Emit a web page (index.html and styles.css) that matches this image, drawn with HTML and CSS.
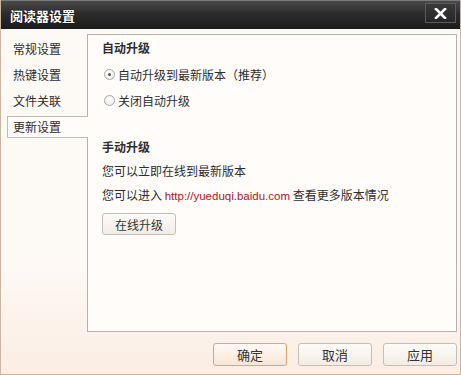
FILE: index.html
```html
<!DOCTYPE html>
<html lang="zh-CN">
<head>
    <meta charset="UTF-8">
    <title>阅读器设置</title>
    <link rel="stylesheet" href="styles.css">
</head>
<body>

<div class="window">
    <div class="titlebar">
        <span class="title">阅读器设置</span>
        <button class="close-btn">
            <svg width="13" height="11" viewBox="0 0 13 11">
                <path d="M2 1 L11 10 M11 1 L2 10" stroke="#fff" stroke-width="2.6" stroke-linecap="square"/>
            </svg>
        </button>
    </div>

    <div class="main">
        <ul class="sidebar">
            <li class="tab">常规设置</li>
            <li class="tab">热键设置</li>
            <li class="tab">文件关联</li>
            <li class="tab active">更新设置</li>
        </ul>

        <div class="panel">
            <div class="section auto">
                <div class="heading">自动升级</div>
                <label class="radio-row"><span class="radio checked"></span>自动升级到最新版本（推荐）</label>
                <label class="radio-row"><span class="radio"></span>关闭自动升级</label>
            </div>

            <div class="section manual">
                <div class="heading">手动升级</div>
                <div class="line">您可以立即在线到最新版本</div>
                <div class="line">您可以进入 <a class="link" href="#">http://yueduqi.baidu.com</a> 查看更多版本情况</div>
                <button class="btn small">在线升级</button>
            </div>
        </div>
    </div>

    <div class="footer">
        <button class="btn primary">确定</button>
        <button class="btn">取消</button>
        <button class="btn">应用</button>
    </div>
</div>

</body>
</html>
```

FILE: styles.css
```css
* {
    box-sizing: border-box;
}
body {
    margin: 0;
    font-family: "Noto Sans CJK SC", "Liberation Sans", sans-serif;
    font-size: 12px;
    color: #2e2e2e;
}
.window {
    width: 461px;
    height: 375px;
    display: flex;
    flex-direction: column;
    background: linear-gradient(#fdf9f5 0%, #fdf9f5 70%, #fbede2 100%);
    border-left: 1px solid #c9b6a4;
    border-right: 1px solid #c9b6a4;
    border-bottom: 1px solid #c9b6a4;
}
.titlebar {
    height: 29px;
    flex: none;
    display: flex;
    align-items: center;
    justify-content: space-between;
    padding: 0 4px 0 9px;
    background: linear-gradient(#4a4a4a, #2c2c2c 45%, #1b1b1b);
    border-top: 1px solid #7a7a7a;
}
.title {
    color: #fff;
    font-size: 13px;
    font-weight: bold;
    text-shadow: 0 0 1px #000;
}
.close-btn {
    width: 31px;
    height: 20px;
    margin-top: -4px;
    padding: 0;
    border: 1px solid #5c5c5c;
    background: linear-gradient(#3a3a3a, #262626);
    display: flex;
    align-items: center;
    justify-content: center;
}
.main {
    flex: 1;
    display: flex;
    padding-top: 5px;
}
.sidebar {
    list-style: none;
    margin: 0;
    padding: 4px 0 0 6px;
    width: 86px;
    flex: none;
}
.tab {
    height: 22px;
    line-height: 22px;
    margin-bottom: 4px;
    padding-left: 6px;
}
.tab.active {
    position: relative;
    z-index: 1;
    margin-right: -1px;
    padding-left: 5px;
    background: #fffcf9;
    border: 1px solid #c2bab2;
    border-right: none;
    line-height: 20px;
}
.panel {
    flex: 1;
    margin: 0 3px 0 0;
    background: #fffcf9;
    border: 1px solid #b9b1a9;
    padding: 0 14px;
}
.heading {
    font-weight: bold;
    height: 26px;
    line-height: 26px;
}
.radio-row {
    display: flex;
    align-items: center;
    height: 26px;
    padding-left: 2px;
}
.radio {
    width: 11px;
    height: 11px;
    border-radius: 50%;
    border: 1px solid #a8a8a8;
    background: radial-gradient(circle at 40% 35%, #fff, #e8e8e8);
    margin-right: 3px;
    display: flex;
    align-items: center;
    justify-content: center;
}
.radio.checked::after {
    content: "";
    width: 3px;
    height: 3px;
    border-radius: 50%;
    background: #555;
}
.manual {
    margin-top: 22px;
}
.manual .heading {
    height: 24px;
    line-height: 24px;
}
.line {
    height: 24px;
    line-height: 24px;
}
.link {
    color: #b1151b;
    text-decoration: none;
    font-family: "Liberation Sans", sans-serif;
    font-size: 11.5px;
}
.btn {
    font-family: "Noto Sans CJK SC", sans-serif;
    font-size: 13px;
    color: #333;
    width: 74px;
    height: 23px;
    padding: 0;
    border: 1px solid #c6beb6;
    border-radius: 3px;
    background: linear-gradient(#fdfbf8, #f3ece5);
}
.btn.small {
    font-size: 12px;
    margin-top: 6px;
    height: 22px;
}
.btn.primary {
    border-color: #e5a46c;
    background: linear-gradient(#fffaf4, #f7e6d6);
}
.footer {
    flex: none;
    display: flex;
    justify-content: flex-end;
    gap: 11px;
    padding: 11px 3px 8px 0;
}
```
